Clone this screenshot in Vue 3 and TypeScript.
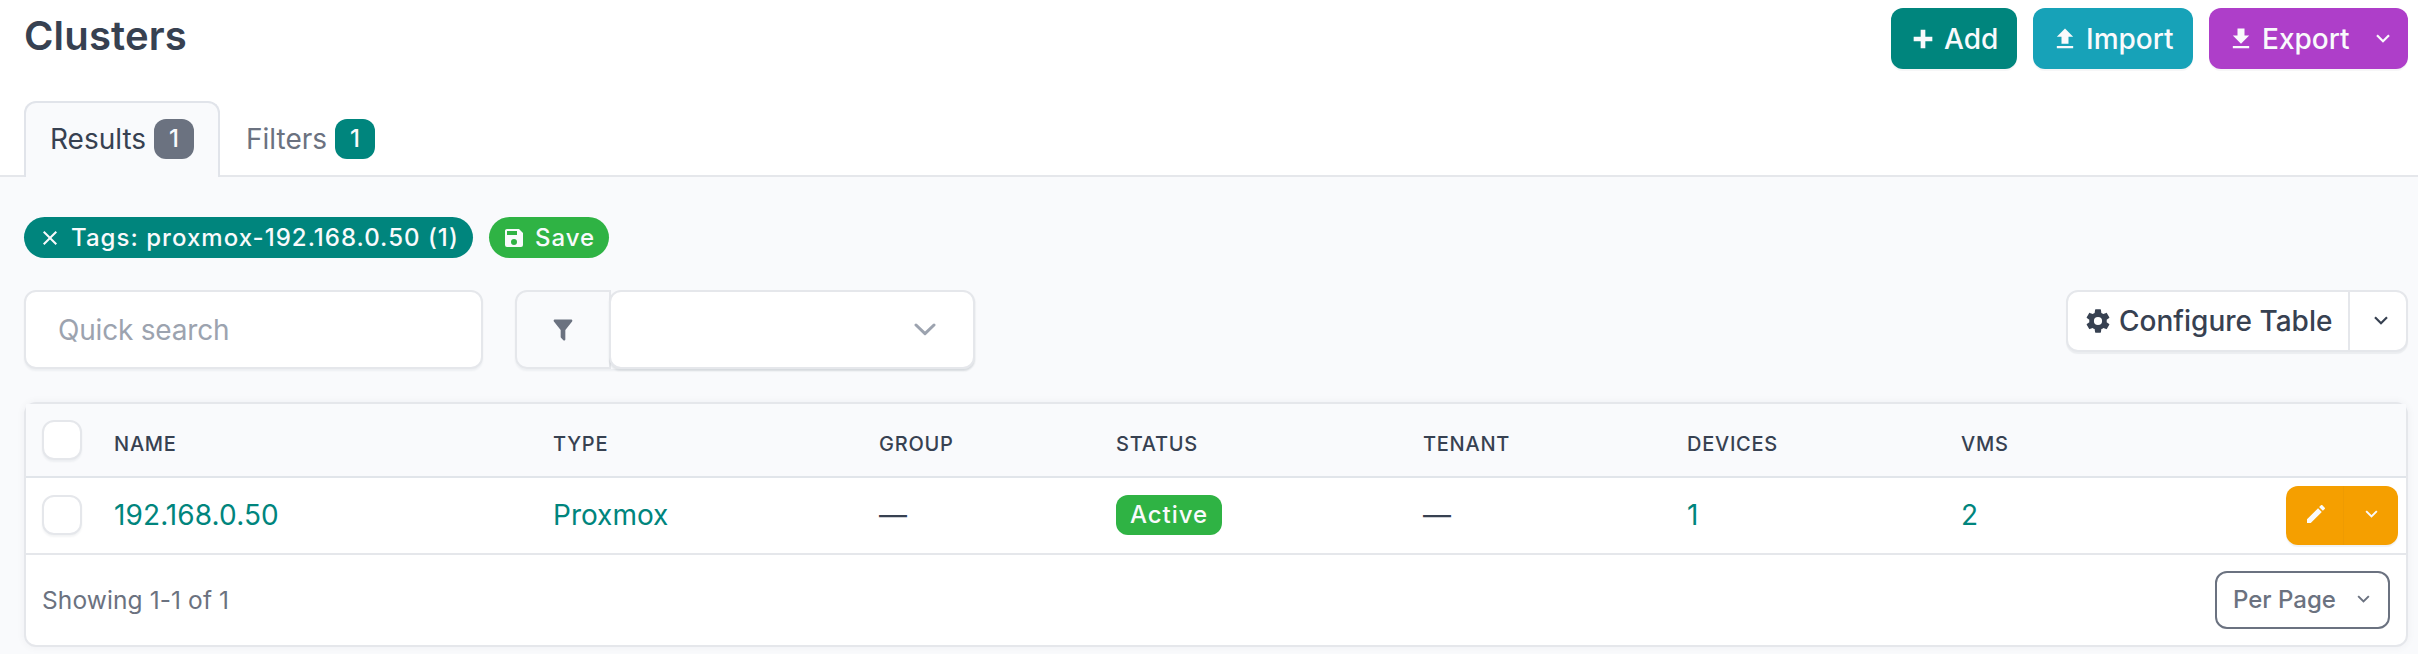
<script setup lang="ts">
interface Column {
  key: string
  label: string
}

interface Cluster {
  name: string
  type: string
  status: string
  devices: number
  vms: number
}

const columns: Column[] = [
  { key: 'name', label: 'Name' },
  { key: 'type', label: 'Type' },
  { key: 'group', label: 'Group' },
  { key: 'status', label: 'Status' },
  { key: 'tenant', label: 'Tenant' },
  { key: 'devices', label: 'Devices' },
  { key: 'vms', label: 'VMs' },
]

const clusters: Cluster[] = [
  { name: '192.168.0.50', type: 'Proxmox', status: 'Active', devices: 1, vms: 2 },
]

const icons = {
  plus: 'M20 14H14V20H10V14H4V10H10V4H14V10H20V14Z',
  upload: 'M9,16V10H5L12,3L19,10H15V16H9M5,20V18H19V20H5Z',
  download: 'M5,20H19V18H5M19,9H15V3H9V9H5L12,16L19,9Z',
  close:
    'M19,6.41L17.59,5L12,10.59L6.41,5L5,6.41L10.59,12L5,17.59L6.41,19L12,13.41L17.59,19L19,17.59L13.41,12L19,6.41Z',
  save: 'M15,9H5V5H15M12,19A3,3 0 0,1 9,16A3,3 0 0,1 12,13A3,3 0 0,1 15,16A3,3 0 0,1 12,19M17,3H5C3.89,3 3,3.9 3,5V19A2,2 0 0,0 5,21H19A2,2 0 0,0 21,19V7L17,3Z',
  filter:
    'M14,12V19.88C14.04,20.18 13.94,20.5 13.71,20.71C13.32,21.1 12.69,21.1 12.3,20.71L10.29,18.7C10.06,18.47 9.96,18.16 10,17.87V12H9.97L4.21,4.62C3.87,4.19 3.95,3.56 4.38,3.22C4.57,3.08 4.78,3 5,3H19C19.22,3 19.43,3.08 19.62,3.22C20.05,3.56 20.13,4.19 19.79,4.62L14.03,12H14Z',
  cog: 'M12,15.5A3.5,3.5 0 0,1 8.5,12A3.5,3.5 0 0,1 12,8.5A3.5,3.5 0 0,1 15.5,12A3.5,3.5 0 0,1 12,15.5M19.43,12.97C19.47,12.65 19.5,12.33 19.5,12C19.5,11.67 19.47,11.34 19.43,11L21.54,9.37C21.73,9.22 21.78,8.95 21.66,8.73L19.66,5.27C19.54,5.05 19.27,4.96 19.05,5.05L16.56,6.05C16.04,5.66 15.5,5.32 14.87,5.07L14.5,2.42C14.46,2.18 14.25,2 14,2H10C9.75,2 9.54,2.18 9.5,2.42L9.13,5.07C8.5,5.32 7.96,5.66 7.44,6.05L4.95,5.05C4.73,4.96 4.46,5.05 4.34,5.27L2.34,8.73C2.21,8.95 2.27,9.22 2.46,9.37L4.57,11C4.53,11.34 4.5,11.67 4.5,12C4.5,12.33 4.53,12.65 4.57,12.97L2.46,14.63C2.27,14.78 2.21,15.05 2.34,15.27L4.34,18.73C4.46,18.95 4.73,19.03 4.95,18.95L7.44,17.94C7.96,18.34 8.5,18.68 9.13,18.93L9.5,21.58C9.54,21.82 9.75,22 10,22H14C14.25,22 14.46,21.82 14.5,21.58L14.87,18.93C15.5,18.67 16.04,18.34 16.56,17.94L19.05,18.95C19.27,19.03 19.54,18.95 19.66,18.73L21.66,15.27C21.78,15.05 21.73,14.78 21.54,14.63L19.43,12.97Z',
  pencil:
    'M20.71,7.04C21.1,6.65 21.1,6 20.71,5.63L18.37,3.29C18,2.9 17.35,2.9 16.96,3.29L15.12,5.12L18.87,8.87M3,17.25V21H6.75L17.81,9.93L14.06,6.18L3,17.25Z',
}
</script>

<template>
  <div class="page">
    <header class="head">
      <h1>Clusters</h1>
      <div class="actions">
        <button class="btn add">
          <svg class="icon" viewBox="0 0 24 24"><path :d="icons.plus" /></svg><span>Add</span>
        </button>
        <button class="btn import">
          <svg class="icon" viewBox="0 0 24 24"><path :d="icons.upload" /></svg><span>Import</span>
        </button>
        <button class="btn export">
          <svg class="icon" viewBox="0 0 24 24"><path :d="icons.download" /></svg><span>Export</span>
          <svg class="caret" viewBox="0 0 14 9"><path d="M1 1.2L7 7.2L13 1.2" /></svg>
        </button>
      </div>
    </header>

    <nav class="tabs">
      <a class="tab active">Results<span class="count grey">1</span></a>
      <a class="tab">Filters<span class="count teal">1</span></a>
    </nav>

    <main class="body">
      <div class="pills">
        <span class="pill tags">
          <svg class="icon small" viewBox="0 0 24 24"><path :d="icons.close" /></svg>
          <span>Tags: proxmox-192.168.0.50 (1)</span>
        </span>
        <span class="pill save">
          <svg class="icon small" viewBox="0 0 24 24"><path :d="icons.save" /></svg>
          <span>Save</span>
        </span>
      </div>

      <div class="controls">
        <input class="search" type="text" placeholder="Quick search" />
        <div class="filter">
          <span class="filter-icon">
            <svg class="icon" viewBox="0 0 24 24"><path :d="icons.filter" /></svg>
          </span>
          <span class="select">
            <svg class="select-caret" viewBox="0 0 22 13"><path d="M2 2L11 10.7L20 2" /></svg>
          </span>
        </div>
        <div class="configure">
          <button class="configure-main">
            <svg class="icon" viewBox="0 0 24 24"><path :d="icons.cog" /></svg><span>Configure Table</span>
          </button>
          <button class="configure-more">
            <svg class="caret" viewBox="0 0 14 9"><path d="M1 1.2L7 7.2L13 1.2" /></svg>
          </button>
        </div>
      </div>

      <section class="card">
        <div class="grid head-row">
          <span class="check"></span>
          <span v-for="c in columns" :key="c.key" class="th">{{ c.label }}</span>
        </div>
        <div v-for="c in clusters" :key="c.name" class="grid row">
          <span class="check"></span>
          <a class="name">{{ c.name }}</a>
          <a>{{ c.type }}</a>
          <span>—</span>
          <span><span class="status">{{ c.status }}</span></span>
          <span>—</span>
          <a>{{ c.devices }}</a>
          <a>{{ c.vms }}</a>
          <div class="edit">
            <button class="edit-main">
              <svg class="icon small" viewBox="0 0 24 24"><path :d="icons.pencil" /></svg>
            </button>
            <button class="edit-more">
              <svg class="caret mini" viewBox="0 0 14 9"><path d="M1 1.2L7 7.2L13 1.2" /></svg>
            </button>
          </div>
        </div>
        <footer class="foot">
          <span class="showing">Showing 1-1 of 1</span>
          <button class="per-page">
            <span>Per Page</span>
            <svg class="caret mini" viewBox="0 0 14 9"><path d="M1 1.2L7 7.2L13 1.2" /></svg>
          </button>
        </footer>
      </section>
    </main>
  </div>
</template>

<style>
body {
  margin: 0;
  background: #f9fafc;
}
</style>

<style scoped>
* {
  box-sizing: border-box;
}
.page {
  height: 654px;
  overflow: hidden;
  background: #fff;
  color: #374151;
  font: 400 28px/40px Inter, "Liberation Sans", sans-serif;
}
button,
input {
  margin: 0;
  padding: 0;
  border: 0;
  font: inherit;
  color: inherit;
  background: none;
}
.icon {
  width: 28px;
  height: 28px;
  fill: currentColor;
  flex: none;
}
.icon.small {
  width: 24px;
  height: 24px;
}
.caret {
  width: 14px;
  height: 9px;
  fill: none;
  stroke: currentColor;
  stroke-width: 2.2;
  flex: none;
}
.caret.mini {
  width: 13px;
  height: 8px;
}
.head {
  display: flex;
  justify-content: space-between;
  height: 101px;
  padding: 8px 10px 0 24px;
}
h1 {
  margin: 4px 0 0;
  font-size: 40px;
  line-height: 48px;
  font-weight: 600;
  letter-spacing: 0.15px;
}
.actions {
  display: flex;
  gap: 16px;
}
.btn {
  display: flex;
  align-items: center;
  height: 61px;
  border-radius: 12px;
  color: #f9fafc;
  font-weight: 500;
  box-shadow: 0 2px 0 rgba(24, 36, 51, 0.04);
}
.btn span {
  margin-left: 7px;
}
.add {
  width: 126px;
  padding-left: 18px;
  background: #00857d;
}
.import {
  width: 160px;
  padding-left: 18px;
  background: #17a2b8;
}
.export {
  width: 199px;
  padding-left: 18px;
  background: #ae3ec9;
}
.export .caret {
  margin-left: 26px;
  margin-bottom: 1px;
}
.tabs {
  display: flex;
  height: 76px;
  padding-left: 24px;
  box-shadow: inset 0 -2px #e5e7eb;
}
.tab {
  display: flex;
  align-items: center;
  height: 76px;
  padding: 0 24px 2px;
  border: 2px solid transparent;
  border-bottom: 0;
  color: #6b7280;
}
.tab.active {
  width: 196px;
  border-color: #e1e4ea;
  border-radius: 12px 12px 0 0;
  background: #f9fafc;
  color: #374151;
}
.count {
  width: 40px;
  height: 40px;
  margin-left: 8px;
  border-radius: 12px;
  color: #f9fafc;
  font-size: 24px;
  line-height: 39px;
  font-weight: 500;
  text-align: center;
}
.grey {
  background: #6b7280;
}
.teal {
  background: #00857d;
}
.body {
  height: 477px;
  padding: 40px 10px 0 24px;
  background: #f9fafc;
}
.pills {
  display: flex;
  gap: 16px;
}
.pill {
  display: flex;
  align-items: center;
  height: 41px;
  border-radius: 21px;
  color: #f9fafc;
  font-size: 24px;
  line-height: 24px;
  font-weight: 500;
  letter-spacing: 0.96px;
}
.tags {
  width: 449px;
  padding-left: 14px;
  background: #00857d;
  letter-spacing: 1.03px;
}
.tags span {
  margin-left: 9px;
}
.save {
  width: 120px;
  padding-left: 13px;
  background: #2fb344;
}
.save span {
  margin-left: 9px;
}
.controls {
  display: flex;
  align-items: flex-start;
  margin-top: 32px;
}
.search {
  width: 459px;
  height: 79px;
  padding: 0 32px;
  border: 2px solid #e5e7eb;
  border-radius: 12px;
  background: #fff;
  box-shadow: 0 2px 2px rgba(24, 36, 51, 0.05);
  letter-spacing: -0.2px;
}
.search::placeholder {
  color: #9ca3af;
  opacity: 1;
}
.filter {
  display: flex;
  width: 460px;
  height: 79px;
  margin-left: 32px;
  border-radius: 12px;
  box-shadow: 0 2px 2px rgba(24, 36, 51, 0.05);
}
.filter-icon {
  display: flex;
  align-items: center;
  justify-content: center;
  width: 96px;
  border: 2px solid #e5e7eb;
  border-radius: 12px 0 0 12px;
  color: #6b7280;
}
.select {
  display: flex;
  align-items: center;
  justify-content: flex-end;
  flex: 1;
  margin-left: -2px;
  padding-right: 37px;
  border: 2px solid #e5e7eb;
  border-radius: 12px;
  background: #fff;
  box-shadow: 0 2px 2px rgba(24, 36, 51, 0.1);
}
.select-caret {
  width: 22px;
  height: 13px;
  fill: none;
  stroke: #9ca3af;
  stroke-width: 3;
  stroke-linecap: round;
  stroke-linejoin: round;
}
.configure {
  display: flex;
  width: 342px;
  height: 62px;
  margin-left: auto;
  border: 2px solid #e5e7eb;
  border-radius: 12px;
  background: #fff;
  box-shadow: 0 2px 1px rgba(24, 36, 51, 0.06);
  font-weight: 500;
}
.configure-main {
  display: flex;
  align-items: center;
  width: 282px;
  padding-left: 16px;
  border-right: 2px solid #e5e7eb;
}
.configure-main span {
  margin-left: 7px;
}
.configure-more {
  display: flex;
  align-items: center;
  justify-content: center;
  flex: 1;
  padding-left: 6px;
  padding-bottom: 2px;
}
.card {
  height: 245px;
  margin-top: 33px;
  border: 2px solid #e5e7eb;
  border-radius: 12px;
  background: #fff;
  box-shadow: 0 0 8px rgba(24, 36, 51, 0.05);
}
.grid {
  display: grid;
  grid-template-columns: 72px 439px 326px 237px 307px 264px 274px 325px 112px;
  align-items: center;
  padding-left: 16px;
}
.head-row {
  height: 74px;
  border-bottom: 2px solid #e1e5ea;
  background: #f9fafc;
}
.th {
  padding-top: 7px;
  font-size: 20px;
  line-height: 32px;
  font-weight: 500;
  letter-spacing: 0.75px;
  text-transform: uppercase;
}
.row {
  height: 77px;
  padding-bottom: 2px;
  border-bottom: 2px solid #e5e7eb;
}
.row a {
  color: #00857d;
}
.row .name {
  letter-spacing: 0.1px;
}
.check {
  width: 40px;
  height: 40px;
  border: 2px solid #e5e7eb;
  border-radius: 12px;
  background: #fff;
  box-shadow: 0 2px 2px rgba(24, 36, 51, 0.05);
}
.status {
  display: block;
  width: 106px;
  height: 40px;
  border-radius: 12px;
  background: #2fb344;
  color: #f9fafc;
  font-size: 24px;
  font-weight: 500;
  letter-spacing: 0.96px;
  text-align: center;
}
.edit {
  display: flex;
  width: 112px;
  height: 59px;
  margin-top: 1px;
  border-radius: 12px;
  background: #f59f00;
  color: #f9fafc;
  box-shadow: 0 2px 1px rgba(24, 36, 51, 0.06);
}
.edit-main,
.edit-more {
  display: flex;
  align-items: center;
  justify-content: center;
  height: 59px;
}
.edit-main {
  width: 58px;
  padding-left: 2px;
  padding-bottom: 3px;
  border-right: 1px solid #ee9b02;
}
.edit-more {
  flex: 1;
  padding-bottom: 2px;
}
.foot {
  display: flex;
  align-items: center;
  justify-content: space-between;
  height: 90px;
  padding: 0 16px;
  color: #6b7280;
  font-size: 24px;
}
.showing {
  font-size: 24.5px;
  letter-spacing: 0.1px;
}
.per-page {
  display: flex;
  align-items: center;
  justify-content: space-between;
  width: 175px;
  height: 58px;
  padding: 0 18px 0 16px;
  border: 2px solid #6b7280;
  border-radius: 12px;
  font-weight: 500;
}
.per-page .caret {
  margin-bottom: 2px;
}
</style>
